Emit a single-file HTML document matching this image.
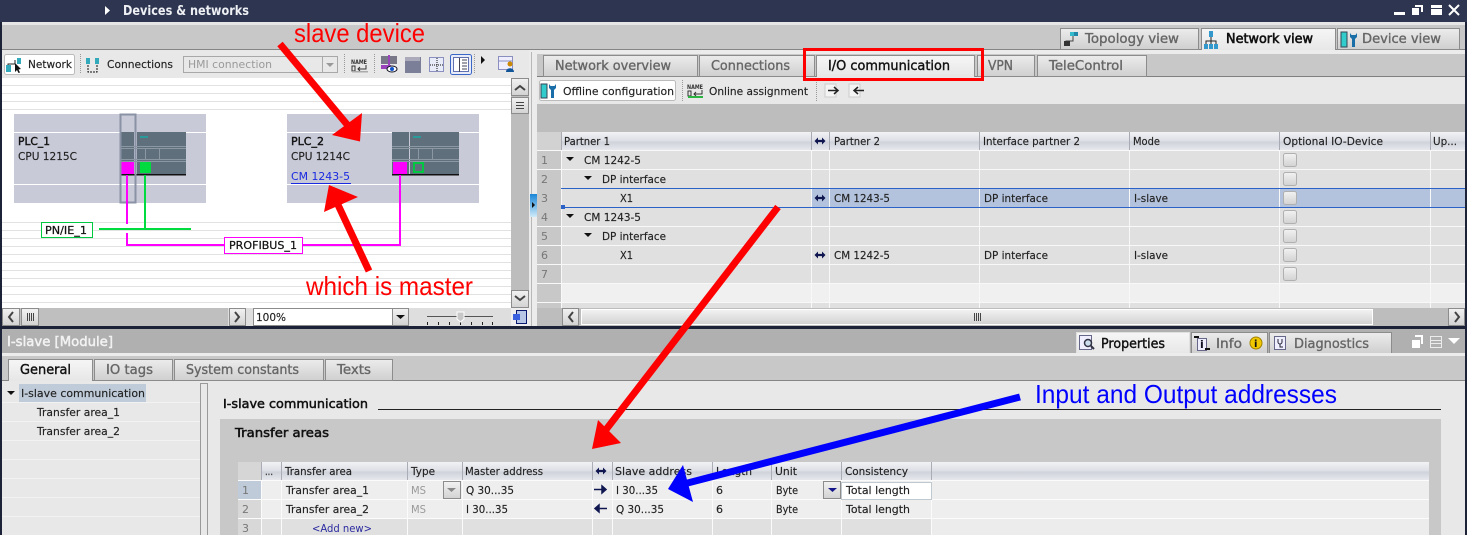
<!DOCTYPE html>
<html><head><meta charset="utf-8"><style>
html,body{margin:0;padding:0;background:#e8e8e8;width:1467px;height:535px;overflow:hidden}
svg{display:block}
text{font-family:"DejaVu Sans","Liberation Sans",sans-serif;font-size:11px;fill:#222;stroke:#222;stroke-width:.15px;white-space:pre}
.t{font-size:13px;fill:#666;stroke:#666;stroke-width:.35px}
.a{fill:#111;stroke:#111;stroke-width:.4px}
.m{fill:#111;stroke:#111;stroke-width:.4px}
.g{fill:#777;stroke:none}
.n{stroke:none}
.h{font-size:26px;font-family:"Liberation Sans",sans-serif;stroke:none}
</style></head><body>
<svg width="1467" height="535" viewBox="0 0 1467 535" xmlns="http://www.w3.org/2000/svg">
<defs>
<linearGradient id="hd" x1="0" y1="0" x2="0" y2="1"><stop offset="0" stop-color="#f2f2f4"/><stop offset=".5" stop-color="#dcdfe6"/><stop offset=".55" stop-color="#cfd2da"/><stop offset="1" stop-color="#e6e8ee"/></linearGradient>
<linearGradient id="tb" x1="0" y1="0" x2="0" y2="1"><stop offset="0" stop-color="#ececec"/><stop offset="1" stop-color="#cfcfcf"/></linearGradient>
<linearGradient id="ta" x1="0" y1="0" x2="0" y2="1"><stop offset="0" stop-color="#f6f6f6"/><stop offset="1" stop-color="#e6e6e6"/></linearGradient>
<linearGradient id="bt" x1="0" y1="0" x2="0" y2="1"><stop offset="0" stop-color="#f2f2f2"/><stop offset="1" stop-color="#d2d2d2"/></linearGradient>
<linearGradient id="hn" x1="0" y1="0" x2="0" y2="1"><stop offset="0" stop-color="#1a86d8"/><stop offset="1" stop-color="#cfeaf8"/></linearGradient>
<path id="lr" d="M-5.500 0l3.500-3.500v2.400h4V-3.500L5.500 0 2 3.500V1.100h-4v2.400z" fill="#0f1650"/>
<path id="tri" d="M-4-2h8l-4 4z" fill="#111"/>
</defs>

<!-- base -->
<rect width="1467" height="535" fill="#e8e8e8"/>
<rect width="1467" height="22" fill="#2d3550"/>
<rect y="22" width="1467" height="3" fill="#e6e6e6"/>
<rect y="25" width="1467" height="24" fill="#c8c8c8"/>
<rect y="49" width="1467" height="1" fill="#858585"/>
<path d="M105 6l5 4.500-5 4.500z" fill="#fff"/>
<text class="n" x="123" y="15" textLength="126" lengthAdjust="spacingAndGlyphs" style="font-size:13px;font-weight:700;fill:#eef0f4">Devices &amp; networks</text>
<!-- window buttons -->
<rect x="1394" y="12" width="11" height="3" fill="#fff"/>
<path d="M1412 8h7v7h-7zM1415 5h8v7h-2V7h-6z" fill="#fff"/>
<rect x="1431" y="5" width="11" height="3" fill="#fff"/><rect x="1431" y="9" width="11" height="6" fill="#fff"/>
<path d="M1449 5l10 10M1459 5l-10 10" stroke="#fff" stroke-width="2"/>

<!-- view tabs -->
<rect x="1060.500" y="28.500" width="138" height="21" fill="url(#tb)" stroke="#8c8c8c"/>
<rect x="1201.500" y="28.500" width="134" height="23" fill="url(#ta)" stroke="#8c8c8c"/>
<rect x="1337.500" y="28.500" width="122" height="21" fill="url(#tb)" stroke="#8c8c8c"/>
<text class="t" x="1085" y="43" textLength="94" lengthAdjust="spacingAndGlyphs">Topology view</text>
<text class="t a" x="1226" y="43" textLength="87" lengthAdjust="spacingAndGlyphs" style="stroke-width:.6px">Network view</text>
<text class="t" x="1362" y="43" textLength="79" lengthAdjust="spacingAndGlyphs">Device view</text>
<!-- topology icon -->
<path d="M1066 44v-3h7v-7h2" fill="none" stroke="#444"/><rect x="1064" y="41" width="6" height="5" fill="#333"/><rect x="1070" y="32" width="4" height="4" fill="#3bc"/><rect x="1074" y="32" width="4" height="4" fill="#28a"/>
<!-- network icon -->
<path d="M1206 44v-3h10v3M1211 37v7" fill="none" stroke="#222"/><rect x="1209" y="31" width="4" height="6" fill="#39c"/><rect x="1204" y="44" width="4" height="5" fill="#39c"/><rect x="1209" y="44" width="4" height="5" fill="#39c"/><rect x="1214" y="44" width="4" height="5" fill="#39c"/>
<!-- device icon -->
<rect x="1341" y="32" width="6" height="15" fill="#3cc" stroke="#345"/><path d="M1350 33v4l2 2v8h3v-8l2-2v-4l-1.500 2h-4z" fill="#1a6ea8"/>

<!-- LEFT TOOLBAR -->
<rect x="2" y="50" width="528" height="28" fill="#e8e8e8"/>
<rect x="4.500" y="54.500" width="70" height="20" rx="2" fill="#fff" stroke="#bbb"/>
<path d="M8 70v-6h7v-4" fill="none" stroke="#222"/><rect x="6" y="65" width="5" height="7" fill="#3ab"/><rect x="17" y="58" width="4" height="6" fill="#3ab"/><path d="M15 63l6 6-2.500.5 1.500 3-1.500.5-1.500-3-2 2z" fill="#111"/>
<text x="28" y="68" textLength="44" lengthAdjust="spacingAndGlyphs">Network</text>
<path d="M80.500 54v20M344.500 54v20M374.500 54v20M474.500 54v20" stroke="#999" stroke-dasharray="1 1"/>
<rect x="86" y="58" width="4" height="6" fill="#3ab"/><rect x="95" y="58" width="4" height="6" fill="#3ab"/><path d="M88 65v7h9v-7" fill="none" stroke="#111" stroke-dasharray="2 1"/>
<text x="107" y="68" textLength="66" lengthAdjust="spacingAndGlyphs">Connections</text>
<rect x="183.500" y="56.500" width="154" height="16" fill="#e8e8e8" stroke="#a8a8a8"/>
<path d="M322.500 57v16" stroke="#a8a8a8"/><path d="M326 63h8l-4 4z" fill="#999"/>
<text class="n" x="188" y="68" textLength="84" lengthAdjust="spacingAndGlyphs" style="fill:#999">HMI connection</text>
<text class="n" x="351" y="64" style="font-size:6.500px;font-weight:700;fill:#333" textLength="16" lengthAdjust="spacingAndGlyphs">NAME</text>
<path d="M352 66h3v5h-3zM366 65v4h-8M360 67l-2 2 2 2" fill="none" stroke="#333"/><rect x="352" y="71" width="16" height="1.500" fill="#aaa"/>
<rect x="381" y="56" width="16" height="8" fill="#778"/><rect x="381" y="65" width="10" height="4" fill="#94b"/><ellipse cx="392" cy="69" rx="5" ry="3" fill="#fff" stroke="#112"/><circle cx="392" cy="69" r="2" fill="#15c"/><path d="M389 55v10" stroke="#94b" stroke-width="2"/>
<rect x="405" y="57" width="16" height="16" fill="#7b8098"/><rect x="405" y="57" width="15" height="4" fill="#aab"/>
<rect x="429.500" y="57.500" width="14" height="14" fill="#e8ecf8" stroke="#8a8fc0"/><path d="M430 65h14M437 58v14" stroke="#111" stroke-dasharray="1 1"/>
<rect x="450.500" y="54.500" width="21" height="20" rx="2" fill="#e8ecf8" stroke="#3a66c8"/><rect x="453.500" y="57.500" width="15" height="14" fill="#fff" stroke="#6070b0"/><path d="M459.500 58v14M462 60h5M462 63h5M462 66h5M462 69h5" stroke="#445"/>
<path d="M481 56l4 4-4 4z" fill="#111"/>
<rect x="498.500" y="56.500" width="14" height="13" fill="#eef" stroke="#8a8fc0"/><path d="M499 61h14" stroke="#8a8fc0"/><circle cx="510" cy="64" r="2.500" fill="#c80"/><path d="M506 72c0-5 8-5 8 0z" fill="#159"/>

<!-- DIAGRAM -->
<rect x="2" y="78" width="509" height="230" fill="#fff"/>
<path d="M2 85.500h509M2 93.500h509M2 101.500h509M2 109.500h509" stroke="#e2e2e2"/>
<path d="M2 222.500h509M2 230.500h509M2 238.500h509M2 246.500h509M2 254.500h509M2 262.500h509M2 270.500h509M2 278.500h509M2 286.500h509M2 294.500h509M2 302.500h509" stroke="#e2e2e2"/>
<rect x="14" y="114" width="192" height="89" fill="#c8cad8"/>
<rect x="287" y="114" width="192" height="89" fill="#c8cad8"/>
<path d="M14 132.500h192M14 184.500h192M287 132.500h192M287 184.500h192" stroke="#fff"/>
<text class="m" x="18" y="145" textLength="32" lengthAdjust="spacingAndGlyphs">PLC_1</text>
<text x="18" y="160" textLength="59" lengthAdjust="spacingAndGlyphs">CPU 1215C</text>
<text class="m" x="291" y="145" textLength="33" lengthAdjust="spacingAndGlyphs">PLC_2</text>
<text x="291" y="160" textLength="59" lengthAdjust="spacingAndGlyphs">CPU 1214C</text>
<text class="n" x="291" y="180" textLength="59" lengthAdjust="spacingAndGlyphs" style="fill:#1a2ae0">CM 1243-5</text>
<rect x="291" y="183" width="60" height="1" fill="#1a2ae0"/>
<!-- PLC1 device -->
<rect x="121" y="132" width="65" height="43" fill="#5f6f7c"/>
<rect x="134" y="132" width="3" height="43" fill="#c8cad8"/>
<path d="M121 146.500h65M121 148.500h65M121 159.500h65M121 161.500h65M145.500 148v12M159.500 148v12" stroke="#8b98a4"/>
<rect x="140" y="136" width="8" height="2" fill="#2a9a9a"/>
<rect x="121" y="174" width="65" height="1.500" fill="#111"/>
<rect x="121" y="162" width="13" height="12" fill="#ff00ff"/>
<rect x="140" y="162" width="11" height="11" fill="#00dc40"/>
<rect x="120.500" y="114.500" width="15" height="88" fill="none" stroke="#8a93a5" stroke-width="2"/>
<!-- PLC2 device -->
<rect x="392" y="132" width="67" height="43" fill="#5f6f7c"/>
<rect x="409" y="132" width="1" height="43" fill="#c8cad8"/>
<path d="M392 146.500h67M392 148.500h67M392 159.500h67M392 161.500h67M418.500 148v12M432.500 148v12" stroke="#8b98a4"/>
<rect x="413" y="136" width="8" height="2" fill="#2a9a9a"/>
<rect x="392" y="174" width="67" height="1.500" fill="#111"/>
<rect x="393" y="162" width="14" height="12" fill="#ff00ff"/>
<rect x="414" y="163" width="9" height="9" fill="none" stroke="#00c840" stroke-width="2"/>
<!-- wires -->
<path d="M127 175v49M127 233v12h273v-70" fill="none" stroke="#ff00ff" stroke-width="2"/>
<path d="M145 175v54M99 229h92" fill="none" stroke="#00dc40" stroke-width="2"/>
<rect x="41.500" y="222.500" width="51" height="15" fill="#fff" stroke="#00c840"/>
<text class="m" x="45" y="234" textLength="42" lengthAdjust="spacingAndGlyphs" style="stroke-width:.25px">PN/IE_1</text>
<rect x="224.500" y="237.500" width="78" height="16" fill="#fff" stroke="#ff00ff"/>
<text class="m" x="229" y="249" textLength="68" lengthAdjust="spacingAndGlyphs" style="stroke-width:.25px">PROFIBUS_1</text>

<!-- left vscroll -->
<rect x="511" y="78" width="18" height="230" fill="#bdbdbd"/>
<rect x="511.500" y="78.500" width="17" height="17" fill="url(#bt)" stroke="#8c8c8c"/>
<path d="M515 90l5-4 5 4" fill="none" stroke="#444" stroke-width="2"/>
<rect x="511.500" y="97.500" width="17" height="16" fill="url(#bt)" stroke="#8c8c8c"/>
<path d="M516 102.500h8M516 105.500h8M516 108.500h8" stroke="#444"/>
<rect x="511.500" y="290.500" width="17" height="17" fill="url(#bt)" stroke="#8c8c8c"/>
<path d="M515 296l5 4 5-4" fill="none" stroke="#444" stroke-width="2"/>
<!-- left hscroll -->
<rect x="2" y="308" width="226" height="18" fill="#bfbfbf"/>
<rect x="228" y="308" width="283" height="18" fill="#dedede"/>
<rect x="2.500" y="308.500" width="17" height="17" fill="url(#bt)" stroke="#8c8c8c"/>
<path d="M13 312l-4 5 4 5" fill="none" stroke="#444" stroke-width="2"/>
<rect x="21.500" y="308.500" width="17" height="17" fill="url(#bt)" stroke="#8c8c8c"/>
<path d="M27.500 313v8M29.500 313v8M31.500 313v8M33.500 313v8" stroke="#444"/>
<rect x="229.500" y="308.500" width="16" height="17" fill="url(#bt)" stroke="#8c8c8c"/>
<path d="M235 312l4 5-4 5" fill="none" stroke="#444" stroke-width="2"/>
<rect x="253.500" y="308.500" width="155" height="17" fill="#fff" stroke="#8c8c8c"/>
<rect x="392.500" y="308.500" width="16" height="17" fill="url(#bt)" stroke="#8c8c8c"/>
<path d="M396 315h9l-4.500 4z" fill="#111"/>
<text x="256" y="321" textLength="30" lengthAdjust="spacingAndGlyphs">100%</text>
<path d="M427 316.500h66" stroke="#555"/>
<path d="M427.500 322v3M438.500 322v3M449.500 322v3M460.500 322v3M471.500 322v3M482.500 322v3M492.500 322v3" stroke="#222"/>
<path d="M457 312h7v7l-3.500 3-3.500-3z" fill="#c8c8c8" stroke="#fff"/>
<rect x="511" y="308" width="18" height="18" fill="#eee"/>
<rect x="516.500" y="310.500" width="10" height="13" fill="#b8c6e6" stroke="#0a1a70"/>
<rect x="513" y="314" width="7" height="6" fill="#3a62e0"/>
<!-- strip -->
<rect x="529" y="50" width="8" height="276" fill="#ececec"/>
<rect x="531" y="52" width="1" height="274" fill="#b8b8b8"/>
<rect x="530" y="194" width="7" height="23" fill="url(#hn)"/>
<path d="M532 202l3 3-3 3z" fill="#111"/>

<!-- RIGHT PANE -->
<rect x="537" y="50" width="928" height="4" fill="#ececec"/>
<rect x="537" y="54" width="928" height="22" fill="#c8c8c8"/>
<rect x="537" y="76" width="928" height="1" fill="#808080"/>
<rect x="543.500" y="55.500" width="154" height="21" fill="url(#tb)" stroke="#8c8c8c"/>
<rect x="699.500" y="55.500" width="115" height="21" fill="url(#tb)" stroke="#8c8c8c"/>
<rect x="816.500" y="55.500" width="158" height="22" fill="url(#ta)" stroke="#8c8c8c"/>
<rect x="977.500" y="55.500" width="57" height="21" fill="url(#tb)" stroke="#8c8c8c"/>
<rect x="1037.500" y="55.500" width="109" height="21" fill="url(#tb)" stroke="#8c8c8c"/>
<text class="t" x="555" y="70" textLength="116" lengthAdjust="spacingAndGlyphs">Network overview</text>
<text class="t" x="711" y="70" textLength="79" lengthAdjust="spacingAndGlyphs">Connections</text>
<text class="t a" x="828" y="70" textLength="122" lengthAdjust="spacingAndGlyphs">I/O communication</text>
<text class="t" x="988" y="70" textLength="25" lengthAdjust="spacingAndGlyphs">VPN</text>
<text class="t" x="1049" y="70" textLength="74" lengthAdjust="spacingAndGlyphs">TeleControl</text>
<rect x="537" y="77" width="928" height="27" fill="#e8e8e8"/>
<rect x="539.500" y="80.500" width="136" height="20" rx="2" fill="#fff" stroke="#bbb"/>
<rect x="541" y="84" width="6" height="14" fill="#3cc" stroke="#345"/><path d="M549 84v4l2 2v8h3v-8l2-2v-4l-1.500 2h-4z" fill="#1a6ea8"/>
<text x="563" y="95" textLength="111" lengthAdjust="spacingAndGlyphs">Offline configuration</text>
<path d="M682.500 80v22M816.500 80v22" stroke="#999" stroke-dasharray="1 1"/>
<text class="n" x="687" y="89" style="font-size:6.500px;font-weight:700;fill:#333" textLength="16" lengthAdjust="spacingAndGlyphs">NAME</text>
<path d="M688 91h3v5h-3zM702 90v4h-8M696 92l-2 2 2 2" fill="none" stroke="#333"/><rect x="688" y="96" width="15" height="2" fill="#2bb540"/>
<text x="709" y="95" textLength="99" lengthAdjust="spacingAndGlyphs">Online assignment</text>
<rect x="825" y="84" width="11" height="13" fill="#f4f4f4" stroke="#ccc"/><path d="M828 90.500h10M834 87l4 3.500-4 3.500" fill="none" stroke="#222" stroke-width="1.500"/>
<rect x="849" y="84" width="11" height="13" fill="#f4f4f4" stroke="#ccc"/><path d="M864 90.500h-10M858 87l-4 3.500 4 3.500" fill="none" stroke="#222" stroke-width="1.500"/>
<rect x="537" y="104" width="928" height="28" fill="#bdbdbd"/>
<!-- table header -->
<rect x="537" y="132" width="928" height="18" fill="url(#hd)"/>
<rect x="537" y="132" width="24" height="18" fill="#d2d2d2"/>
<!-- rows -->
<rect x="537" y="150" width="928" height="158" fill="#e0e0e0"/>
<rect x="537" y="150" width="24" height="158" fill="#c8c8c8"/>
<rect x="561" y="283" width="904" height="19" fill="#f0f0f0"/>
<rect x="811" y="188" width="654" height="19" fill="#b4c3dd"/>
<path d="M537 150.500h928M537 169.500h928M537 226.500h928M537 245.500h928M537 264.500h928M537 283.500h928M537 302.500h928" stroke="#f8f8f8"/>
<path d="M561.500 132v176M811.500 132v176M829.500 132v176M979.500 132v176M1129.500 132v176M1279.500 132v176M1430.500 132v176" stroke="#f8f8f8"/>
<path d="M561.500 132v18M811.500 132v18M829.500 132v18M979.500 132v18M1129.500 132v18M1279.500 132v18M1430.500 132v18" stroke="#a8abb4"/>
<path d="M561 188.500h904M561 207.500h904" stroke="#2a62c8"/>
<rect x="561" y="205" width="4" height="4" fill="#2a62c8"/>
<text x="564" y="145" textLength="46" lengthAdjust="spacingAndGlyphs">Partner 1</text>
<use href="#lr" x="820" y="141"/>
<text x="834" y="145" textLength="46" lengthAdjust="spacingAndGlyphs">Partner 2</text>
<text x="983" y="145" textLength="97" lengthAdjust="spacingAndGlyphs">Interface partner 2</text>
<text x="1133" y="145" textLength="27" lengthAdjust="spacingAndGlyphs">Mode</text>
<text x="1283" y="145" textLength="100" lengthAdjust="spacingAndGlyphs">Optional IO-Device</text>
<text x="1433" y="145" textLength="24" lengthAdjust="spacingAndGlyphs">Up...</text>
<text class="g" x="541" y="164">1</text><text class="g" x="541" y="183">2</text><text class="g" x="541" y="202">3</text><text class="g" x="541" y="221">4</text><text class="g" x="541" y="240">5</text><text class="g" x="541" y="259">6</text><text class="g" x="541" y="278">7</text>
<use href="#tri" x="570" y="159"/><text x="584" y="164" textLength="57" lengthAdjust="spacingAndGlyphs">CM 1242-5</text>
<use href="#tri" x="588" y="178"/><text x="602" y="183" textLength="64" lengthAdjust="spacingAndGlyphs">DP interface</text>
<text x="620" y="202" textLength="13" lengthAdjust="spacingAndGlyphs">X1</text>
<use href="#lr" x="820" y="198"/><text x="834" y="202" textLength="56" lengthAdjust="spacingAndGlyphs">CM 1243-5</text>
<text x="984" y="202" textLength="64" lengthAdjust="spacingAndGlyphs">DP interface</text>
<text x="1134" y="202" textLength="34" lengthAdjust="spacingAndGlyphs">I-slave</text>
<use href="#tri" x="570" y="216"/><text x="584" y="221" textLength="57" lengthAdjust="spacingAndGlyphs">CM 1243-5</text>
<use href="#tri" x="588" y="235"/><text x="602" y="240" textLength="64" lengthAdjust="spacingAndGlyphs">DP interface</text>
<text x="620" y="259" textLength="13" lengthAdjust="spacingAndGlyphs">X1</text>
<use href="#lr" x="820" y="255"/><text x="834" y="259" textLength="56" lengthAdjust="spacingAndGlyphs">CM 1242-5</text>
<text x="984" y="259" textLength="64" lengthAdjust="spacingAndGlyphs">DP interface</text>
<text x="1134" y="259" textLength="34" lengthAdjust="spacingAndGlyphs">I-slave</text>
<g fill="url(#bt)" stroke="#b0b0b0">
<rect x="1283.500" y="153.500" width="13" height="13" rx="2"/><rect x="1283.500" y="172.500" width="13" height="13" rx="2"/><rect x="1283.500" y="191.500" width="13" height="13" rx="2"/><rect x="1283.500" y="210.500" width="13" height="13" rx="2"/><rect x="1283.500" y="229.500" width="13" height="13" rx="2"/><rect x="1283.500" y="248.500" width="13" height="13" rx="2"/><rect x="1283.500" y="267.500" width="13" height="13" rx="2"/>
</g>
<!-- right hscroll -->
<rect x="537" y="308" width="928" height="18" fill="#bdbdbd"/>
<rect x="562.500" y="308.500" width="16" height="17" fill="url(#bt)" stroke="#8c8c8c"/>
<path d="M573 312l-4 5 4 5" fill="none" stroke="#444" stroke-width="2"/>
<rect x="581.500" y="309.500" width="791" height="15" fill="url(#bt)" stroke="#fff"/>
<path d="M974.500 313v8M976.500 313v8M978.500 313v8M980.500 313v8" stroke="#444"/>
<rect x="1448.500" y="308.500" width="16" height="17" fill="url(#bt)" stroke="#8c8c8c"/>
<path d="M1455 312l4 5-4 5" fill="none" stroke="#444" stroke-width="2"/>

<!-- divider & bottom panel -->
<rect x="0" y="326" width="1467" height="3" fill="#1c2238"/>
<rect x="2" y="329" width="1463" height="24" fill="#b0b0b0"/>
<text x="7" y="346" textLength="106" lengthAdjust="spacingAndGlyphs" style="font-size:13px;fill:#f2f2f2;stroke:#f2f2f2;stroke-width:.5px">I-slave [Module]</text>
<rect x="1076.500" y="332.500" width="113" height="22" fill="url(#ta)" stroke="#e0e0e0"/>
<rect x="1191.500" y="332.500" width="76" height="21" fill="url(#tb)" stroke="#8c8c8c"/>
<rect x="1269.500" y="332.500" width="122" height="21" fill="url(#tb)" stroke="#8c8c8c"/>
<text class="t a" x="1101" y="348" textLength="64" lengthAdjust="spacingAndGlyphs">Properties</text>
<text class="t" x="1216" y="348" textLength="26" lengthAdjust="spacingAndGlyphs">Info</text>
<text class="t" x="1294" y="348" textLength="75" lengthAdjust="spacingAndGlyphs">Diagnostics</text>
<rect x="1079.500" y="335.500" width="12" height="14" fill="#eef" stroke="#668"/><circle cx="1088" cy="343" r="3.500" fill="#cde" stroke="#334" stroke-width="1.500"/><path d="M1091 346l3 3" stroke="#334" stroke-width="2"/>
<rect x="1197.500" y="338.500" width="9" height="12" fill="#eef" stroke="#668"/><text class="n" x="1200" y="348" style="font-weight:700;fill:#112">i</text><path d="M1194 337h5M1205 349h5" stroke="#111" stroke-width="2"/>
<circle cx="1256" cy="343" r="6" fill="#f0c800" stroke="#a08000"/><text class="n" x="1254" y="347" style="font-weight:700;font-size:10px;fill:#111">i</text>
<rect x="1274.500" y="336.500" width="11" height="13" fill="#eef" stroke="#668"/><path d="M1278 339v3a2 2 0 0 0 4 0v-3M1280 344v3h3" fill="none" stroke="#223"/>
<path d="M1412 340h8v8h-8zM1415 335h8v9h-2v-7h-6z" fill="#fff"/>
<path d="M1430.500 336.500h11v11h-11zM1430.500 340.500h11M1430.500 343.500h11" fill="none" stroke="#ececec"/>
<path d="M1448 338h12l-6 6z" fill="#fff"/>
<rect x="2" y="353" width="1463" height="3" fill="#ececec"/>
<rect x="2" y="356" width="1463" height="24" fill="#c8c8c8"/>
<rect x="2" y="380" width="1463" height="1" fill="#858585"/>
<rect x="8.500" y="359.500" width="84" height="22" fill="url(#ta)" stroke="#8c8c8c"/>
<rect x="94.500" y="359.500" width="78" height="21" fill="url(#tb)" stroke="#8c8c8c"/>
<rect x="174.500" y="359.500" width="149" height="21" fill="url(#tb)" stroke="#8c8c8c"/>
<rect x="325.500" y="359.500" width="67" height="21" fill="url(#tb)" stroke="#8c8c8c"/>
<text class="t a" x="20" y="374" textLength="51" lengthAdjust="spacingAndGlyphs">General</text>
<text class="t" x="106" y="374" textLength="47" lengthAdjust="spacingAndGlyphs">IO tags</text>
<text class="t" x="186" y="374" textLength="113" lengthAdjust="spacingAndGlyphs">System constants</text>
<text class="t" x="337" y="374" textLength="34" lengthAdjust="spacingAndGlyphs">Texts</text>
<rect x="2" y="381" width="1463" height="154" fill="#e8e8e8"/>
<!-- tree -->
<path d="M2 402.500h198M2 421.500h198M2 440.500h198M2 459.500h198M2 478.500h198M2 497.500h198M2 516.500h198" stroke="#f2f2f2"/>
<rect x="19" y="384" width="127" height="18" fill="#bfcbd8"/>
<use href="#tri" x="11" y="393"/>
<text x="21" y="397" textLength="124" lengthAdjust="spacingAndGlyphs">I-slave communication</text>
<text x="37" y="416" textLength="83" lengthAdjust="spacingAndGlyphs">Transfer area_1</text>
<text x="37" y="435" textLength="83" lengthAdjust="spacingAndGlyphs">Transfer area_2</text>
<rect x="200.500" y="383.500" width="7" height="152" fill="#e8e8e8" stroke="#999"/>
<!-- right content -->
<text class="m" x="223" y="408" textLength="145" lengthAdjust="spacingAndGlyphs" style="font-size:12.500px;stroke-width:.5px">I-slave communication</text>
<rect x="378" y="409" width="1063" height="1" fill="#222"/>
<rect x="220" y="419" width="1221" height="116" fill="#c8c8c8"/>
<text class="m" x="235" y="437" textLength="94" lengthAdjust="spacingAndGlyphs" style="font-size:12.500px;stroke-width:.5px">Transfer areas</text>
<!-- bottom table -->
<rect x="238" y="462" width="1191" height="18" fill="url(#hd)"/>
<rect x="238" y="462" width="24" height="18" fill="#d6d6d6"/>
<rect x="238" y="480" width="1191" height="55" fill="#eeeeee"/>
<rect x="238" y="481" width="24" height="18" fill="#bfcbd8"/>
<rect x="238" y="500" width="24" height="35" fill="#d8d8d8"/>
<rect x="262" y="519" width="1167" height="16" fill="#e0e0e0"/>
<rect x="932" y="519" width="497" height="16" fill="#ececec"/>
<path d="M238 480.500h1191M238 499.500h1191M238 518.500h1191" stroke="#fbfbfb"/>
<path d="M261.500 480v55M281.500 480v55M407.500 480v55M462.500 480v55M592.500 480v55M612.500 480v55M712.500 480v55M771.500 480v55M841.500 480v55M931.500 480v55" stroke="#fbfbfb"/>
<path d="M261.500 462v18M281.500 462v18M407.500 462v18M462.500 462v18M592.500 462v18M612.500 462v18M712.500 462v18M771.500 462v18M841.500 462v18M931.500 462v18" stroke="#aaadb6"/>
<text x="265" y="475" textLength="8" lengthAdjust="spacingAndGlyphs">...</text>
<text x="285" y="475" textLength="67" lengthAdjust="spacingAndGlyphs">Transfer area</text>
<text x="411" y="475" textLength="24" lengthAdjust="spacingAndGlyphs">Type</text>
<text x="465" y="475" textLength="78" lengthAdjust="spacingAndGlyphs">Master address</text>
<use href="#lr" x="601" y="471"/>
<text x="615" y="475" textLength="77" lengthAdjust="spacingAndGlyphs">Slave address</text>
<text x="716" y="475" textLength="36" lengthAdjust="spacingAndGlyphs">Length</text>
<text x="775" y="475" textLength="22" lengthAdjust="spacingAndGlyphs">Unit</text>
<text x="845" y="475" textLength="63" lengthAdjust="spacingAndGlyphs">Consistency</text>
<text class="g" x="242" y="494">1</text><text class="g" x="242" y="513">2</text><text class="g" x="242" y="532">3</text>
<text x="286" y="494" textLength="83" lengthAdjust="spacingAndGlyphs">Transfer area_1</text>
<text x="286" y="513" textLength="83" lengthAdjust="spacingAndGlyphs">Transfer area_2</text>
<text class="n" x="312" y="532" textLength="60" lengthAdjust="spacingAndGlyphs" style="fill:#2a2aa0">&lt;Add new&gt;</text>
<text class="n" x="411" y="494" textLength="15" lengthAdjust="spacingAndGlyphs" style="fill:#999">MS</text>
<text class="n" x="411" y="513" textLength="15" lengthAdjust="spacingAndGlyphs" style="fill:#999">MS</text>
<rect x="443.500" y="481.500" width="17" height="17" fill="url(#bt)" stroke="#8c8c8c"/><path d="M447 488h9l-4.500 4z" fill="#888"/>
<text x="466" y="494" textLength="48" lengthAdjust="spacingAndGlyphs">Q 30...35</text>
<text x="466" y="513" textLength="42" lengthAdjust="spacingAndGlyphs">I 30...35</text>
<path d="M594 489.500h12M602 486l4 3.500-4 3.500z" fill="#0f1650" stroke="#0f1650" stroke-width="1.500"/>
<path d="M607 508.500h-12M599 505l-4 3.500 4 3.500z" fill="#0f1650" stroke="#0f1650" stroke-width="1.500"/>
<text x="616" y="494" textLength="42" lengthAdjust="spacingAndGlyphs">I 30...35</text>
<text x="616" y="513" textLength="48" lengthAdjust="spacingAndGlyphs">Q 30...35</text>
<text x="716" y="494">6</text><text x="716" y="513">6</text>
<text x="776" y="494" textLength="22" lengthAdjust="spacingAndGlyphs">Byte</text>
<text x="776" y="513" textLength="22" lengthAdjust="spacingAndGlyphs">Byte</text>
<rect x="823.500" y="481.500" width="17" height="17" fill="url(#bt)" stroke="#8c8c8c"/><path d="M828 488h9l-4.500 4z" fill="#15158a"/>
<rect x="841.500" y="482.500" width="90" height="17" fill="#fff" stroke="#c0c8d0"/>
<text x="846" y="494" textLength="64" lengthAdjust="spacingAndGlyphs">Total length</text>
<text x="846" y="513" textLength="64" lengthAdjust="spacingAndGlyphs">Total length</text>

<!-- edges -->
<rect x="0" y="22" width="2" height="513" fill="#1c2238"/>
<rect x="1465" y="22" width="2" height="513" fill="#1c2238"/>

<!-- annotations -->
<rect x="804.500" y="49.500" width="178" height="30" fill="none" stroke="#ff0000" stroke-width="3"/>
<text class="h" x="294" y="42" textLength="131" lengthAdjust="spacingAndGlyphs" style="fill:#ff0000">slave device</text>
<text class="h" x="306" y="295" textLength="167" lengthAdjust="spacingAndGlyphs" style="fill:#ff0000">which is master</text>
<text class="h" x="1035" y="403" textLength="302" lengthAdjust="spacingAndGlyphs" style="fill:#0000ff">Input and Output addresses</text>
<g stroke="#ff0000" fill="none" stroke-width="7">
<path d="M280 44L355 134"/>
<path d="M369 271L332 192"/>
<path d="M778 207L598 440"/>
</g>
<path d="M360 141.500L332 135 362 113z" fill="#ff0000"/>
<path d="M329 185L324 212 358 197z" fill="#ff0000"/>
<path d="M592 449L598 420 621 443z" fill="#ff0000"/>
<path d="M1020 397L676 486" stroke="#0000ff" stroke-width="7" fill="none"/>
<path d="M668 489L683 465 693 502z" fill="#0000ff"/>
</svg>
</body></html>
